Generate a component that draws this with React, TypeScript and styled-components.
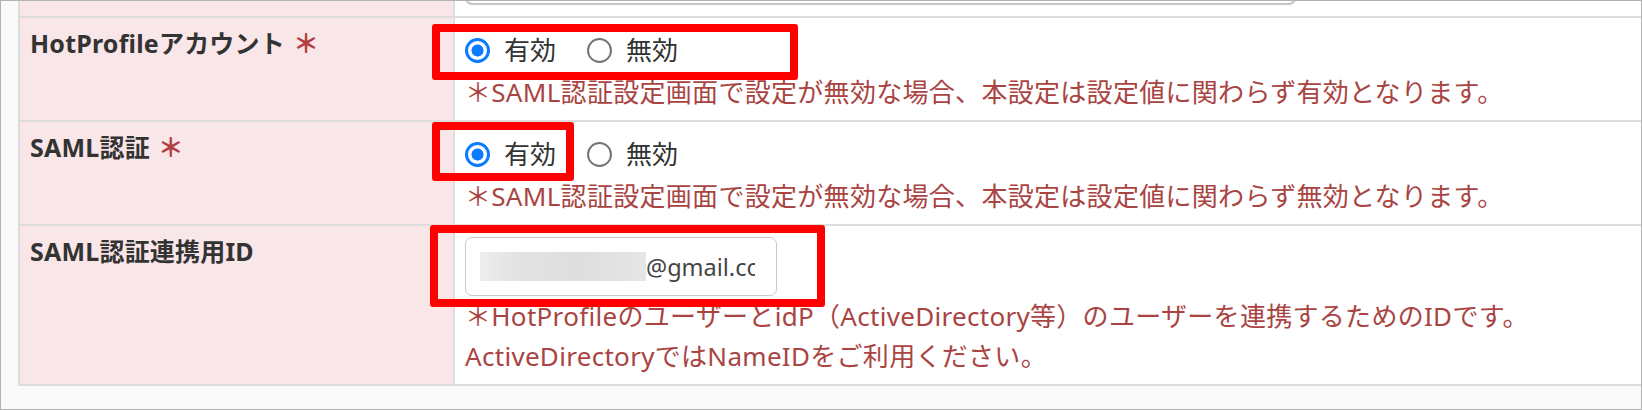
import React from "react";
import styled, { createGlobalStyle } from "styled-components";

const GlobalStyle = createGlobalStyle`
  html, body { margin: 0; padding: 0; background: #fafafa; }
  * { box-sizing: border-box; }
`;

const FONT = `"Noto Sans", "Noto Sans CJK JP", sans-serif`;

const Frame = styled.div`
  width: 1642px;
  height: 410px;
  border: 1px solid #b2b2b2;
  background: #fafafa;
  overflow: hidden;
  padding-left: 17px;
  font-family: ${FONT};
`;

const Table = styled.div`
  width: 1640px;
  border-left: 2px solid #dddddd;
`;

const Row = styled.div<{ $clip?: boolean }>`
  display: grid;
  grid-template-columns: 435px 1fr;
  border-bottom: 2px solid #dddddd;
  background: #ffffff;
  ${(p) => (p.$clip ? "height: 17px; overflow: hidden;" : "")}
`;

const LabelCell = styled.div`
  background: #f9e6e8;
  border-right: 2px solid #dddddd;
  padding: 10px;
  font-size: 25px;
  line-height: 30px;
  font-weight: 700;
  letter-spacing: 0.2px;
  color: #333333;
`;

const Required = styled.span`
  color: #b3403f;
  margin-left: 8px;
  font-size: 26px;
`;

const ValueCell = styled.div<{ $top?: boolean }>`
  position: relative;
  padding: ${(p) => (p.$top ? "0 10px" : "10px 10px 8px")};
`;

const RadioGroup = styled.div`
  display: flex;
  align-items: center;
  gap: 31px;
  height: 44px;
`;

const RadioOption = styled.label`
  display: flex;
  align-items: center;
  gap: 14px;
  font-size: 26px;
  line-height: 30px;
  color: #333333;
`;

const RadioInput = styled.input`
  appearance: none;
  -webkit-appearance: none;
  margin: 0;
  width: 25px;
  height: 25px;
  border-radius: 50%;
  border: 2px solid #747474;
  background: #ffffff;
  &:checked {
    border: 3px solid #0b7bff;
    background: radial-gradient(circle, #0b7bff 0 5.6px, #ffffff 6.4px);
  }
`;

const Note = styled.div`
  color: #a94442;
  font-size: 26px;
  line-height: 40px;
  letter-spacing: 0.3px;
`;

const InputBox = styled.div<{ $wide?: boolean }>`
  width: ${(p) => (p.$wide ? "831px" : "312px")};
  height: ${(p) => (p.$wide ? "40px" : "59px")};
  margin-top: ${(p) => (p.$wide ? "-36px" : "1px")};
  border: ${(p) => (p.$wide ? "2px solid #c4c4c4" : "1.5px solid #c9c9c9")};
  border-radius: 7px;
  background: #ffffff;
  padding: 0 21px 0 14px;
  display: flex;
  align-items: center;
`;

const InputInner = styled.div`
  width: 100%;
  overflow: hidden;
  white-space: nowrap;
  display: flex;
  align-items: center;
  font-size: 23.5px;
  color: #444444;
`;

const Blurred = styled.span`
  flex: none;
  width: 166px;
  height: 29px;
  background: linear-gradient(90deg, #ededed 0%, #e2e2e2 25%, #dedede 60%, #e6e6e6 100%);
  filter: blur(0.6px);
`;

const Mark = styled.div<{ $l: number; $t: number; $w: number; $h: number }>`
  position: absolute;
  left: ${(p) => p.$l}px;
  top: ${(p) => p.$t}px;
  width: ${(p) => p.$w}px;
  height: ${(p) => p.$h}px;
  border: 8px solid #ff0000;
  border-radius: 3px;
  pointer-events: none;
  z-index: 2;
`;

type RadioRowProps = { name: string; value: "on" | "off" };
const Radios = ({ name, value }: RadioRowProps) => (
  <RadioGroup>
    <RadioOption>
      <RadioInput type="radio" name={name} defaultChecked={value === "on"} />
      有効
    </RadioOption>
    <RadioOption>
      <RadioInput type="radio" name={name} defaultChecked={value === "off"} />
      無効
    </RadioOption>
  </RadioGroup>
);

export default function App() {
  return (
    <>
      <GlobalStyle />
      <Frame>
        <Table>
          <Row $clip>
            <LabelCell />
            <ValueCell $top>
              <InputBox $wide />
            </ValueCell>
          </Row>
          <Row>
            <LabelCell>
              HotProfileアカウント<Required>＊</Required>
            </LabelCell>
            <ValueCell>
              <Radios name="hp" value="on" />
              <Note>＊SAML認証設定画面で設定が無効な場合、本設定は設定値に関わらず有効となります。</Note>
              <Mark $l={-23} $t={6} $w={366} $h={56} />
            </ValueCell>
          </Row>
          <Row>
            <LabelCell>
              SAML認証<Required>＊</Required>
            </LabelCell>
            <ValueCell>
              <Radios name="saml" value="on" />
              <Note>＊SAML認証設定画面で設定が無効な場合、本設定は設定値に関わらず無効となります。</Note>
              <Mark $l={-23} $t={0} $w={142} $h={59} />
            </ValueCell>
          </Row>
          <Row>
            <LabelCell>SAML認証連携用ID</LabelCell>
            <ValueCell>
              <InputBox>
                <InputInner>
                  <Blurred />
                  @gmail.com
                </InputInner>
              </InputBox>
              <Note>
                ＊HotProfileのユーザーとidP（ActiveDirectory等）のユーザーを連携するためのIDです。
                <br />
                ActiveDirectoryではNameIDをご利用ください。
              </Note>
              <Mark $l={-25} $t={-1} $w={395} $h={82} />
            </ValueCell>
          </Row>
        </Table>
      </Frame>
    </>
  );
}
